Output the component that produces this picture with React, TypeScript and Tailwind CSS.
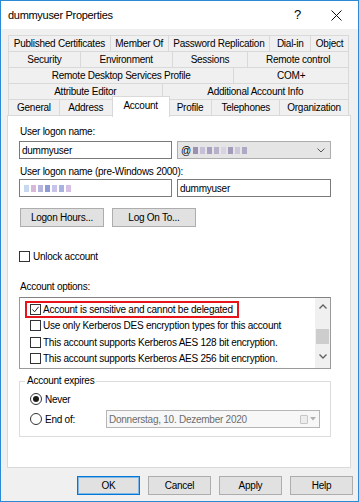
import React from "react";

const tabRows: { label: string; w: number }[][] = [
  [
    { label: "Published Certificates", w: 102 },
    { label: "Member Of", w: 58 },
    { label: "Password Replication", w: 102 },
    { label: "Dial-in", w: 41 },
    { label: "Object", w: 38 },
  ],
  [
    { label: "Security", w: 72 },
    { label: "Environment", w: 92 },
    { label: "Sessions", w: 76 },
    { label: "Remote control", w: 101 },
  ],
  [
    { label: "Remote Desktop Services Profile", w: 226 },
    { label: "COM+", w: 115 },
  ],
  [
    { label: "Attribute Editor", w: 154 },
    { label: "Additional Account Info", w: 187 },
  ],
];

const bottomTabs = [
  { label: "General", w: 51 },
  { label: "Address", w: 53 },
  { label: "Account", w: 56, active: true },
  { label: "Profile", w: 44 },
  { label: "Telephones", w: 68 },
  { label: "Organization", w: 69 },
];

const options = [
  { label: "Account is sensitive and cannot be delegated", checked: true, marked: true },
  { label: "Use only Kerberos DES encryption types for this account" },
  { label: "This account supports Kerberos AES 128 bit encryption." },
  { label: "This account supports Kerberos AES 256 bit encryption." },
];

function Checkbox({ checked = false }: { checked?: boolean }) {
  return (
    <span className="flex h-[11px] w-[11px] shrink-0 items-center justify-center border border-[#333333] bg-white">
      {checked && (
        <svg width="9" height="9" viewBox="0 0 9 9">
          <path d="M1.5 4.5 L3.6 6.8 L7.6 1.8" fill="none" stroke="#222" strokeWidth="1" />
        </svg>
      )}
    </span>
  );
}

function Radio({ checked = false }: { checked?: boolean }) {
  return (
    <span className="flex h-[12px] w-[12px] shrink-0 items-center justify-center rounded-full border border-[#333333] bg-white">
      {checked && <span className="h-[6px] w-[6px] rounded-full bg-[#1a1a1a]" />}
    </span>
  );
}

function Button({ children, w, primary = false }: { children: React.ReactNode; w: number; primary?: boolean }) {
  return (
    <div
      className={
        primary
          ? "flex h-[19px] items-center justify-center border border-[#0078d7] bg-[#e1e1e1] shadow-[inset_0_0_0_1px_#7fb7e6]"
          : "flex h-[19px] items-center justify-center border border-[#adadad] bg-[#e1e1e1]"
      }
      style={{ width: w }}
    >
      {children}
    </div>
  );
}

function Blur({ colors }: { colors: string[] }) {
  return (
    <span className="flex items-center gap-[2px] blur-[0.6px]">
      {colors.map((c, i) => (
        <span key={i} className="h-[7px] w-[5px]" style={{ background: c }} />
      ))}
    </span>
  );
}

export default function App() {
  return (
    <div
      className="flex h-[502px] w-[359px] flex-col border border-[#2b8ad6] bg-[#f0f0f0] text-[10px] tracking-[-0.25px] text-black"
      style={{ fontFamily: '"Liberation Sans", Arial, sans-serif' }}
    >
      {/* title bar */}
      <div className="flex h-[28px] shrink-0 items-center bg-white pl-[7px]">
        <span className="text-[11px] tracking-[-0.3px]">dummyuser Properties</span>
        <span className="ml-auto mr-[30px] text-[13px]">?</span>
        <svg className="mr-[16px]" width="11" height="11" viewBox="0 0 11 11">
          <path d="M0.5 0.5 L10.5 10.5 M10.5 0.5 L0.5 10.5" stroke="#111" strokeWidth="1" />
        </svg>
      </div>

      <div className="flex flex-col pl-[6px] pt-[6px]">
        {/* tab rows */}
        <div className="ml-[1px] flex w-[341px] flex-col">
          {tabRows.map((row, ri) => (
            <div key={ri} className="flex h-[16px] border-l border-t border-[#d9d9d9]">
              {row.map((t) => (
                <div
                  key={t.label}
                  className="flex items-center justify-center border-r border-[#d9d9d9] bg-[#f0f0f0] leading-none"
                  style={{ width: t.w }}
                >
                  {t.label}
                </div>
              ))}
            </div>
          ))}
          <div className="flex h-[16px] border-l border-t border-[#d9d9d9]">
            {bottomTabs.map((t) =>
              t.active ? (
                <div
                  key={t.label}
                  className="relative z-10 -mx-[1px] -mb-[1px] -mt-[4px] flex h-[21px] items-start justify-center border-x border-t border-[#d9d9d9] bg-white pt-[4px] leading-none"
                  style={{ width: t.w + 2 }}
                >
                  {t.label}
                </div>
              ) : (
                <div
                  key={t.label}
                  className="flex items-center justify-center border-r border-[#d9d9d9] bg-[#f0f0f0] leading-none"
                  style={{ width: t.w }}
                >
                  {t.label}
                </div>
              )
            )}
          </div>
        </div>

        {/* panel */}
        <div className="flex h-[353px] w-[344px] flex-col border border-[#d9d9d9] bg-white pl-[11px] pt-[10px]">
          <div className="h-[12px] pl-[1px] leading-[12px]">User logon name:</div>
          <div className="mt-[3px] flex gap-[5px]">
            <div className="flex h-[18px] w-[153px] items-center border border-[#7a7a7a] pl-[2px]">dummyuser</div>
            <div className="flex h-[18px] w-[154px] items-center border border-[#adadad] bg-[#e5e5e5] pl-[3px]">
              <span className="mr-[2px]">@</span>
              <Blur colors={["#9c8fb0", "#c7bfd8", "#a99fc0", "#b7b0c9", "#d8d2e2", "#a49cbb", "#cdc7da", "#b0a9c5"]} />
              <svg className="ml-auto mr-[5px]" width="8" height="5" viewBox="0 0 8 5">
                <path d="M0.5 0.5 L4 4 L7.5 0.5" fill="none" stroke="#555" strokeWidth="1" />
              </svg>
            </div>
          </div>

          <div className="mt-[7px] h-[12px] pl-[1px] leading-[12px]">User logon name (pre-Windows 2000):</div>
          <div className="mt-[1px] flex gap-[5px]">
            <div className="flex h-[18px] w-[153px] items-center border border-[#7a7a7a] pl-[4px]">
              <Blur colors={["#c7d9f0", "#d9b7d8", "#b7b5e0", "#8f9bd6", "#c7c3ea", "#a7b3e0", "#d6c0e6"]} />
            </div>
            <div className="flex h-[18px] w-[154px] items-center border border-[#7a7a7a] pl-[2px]">dummyuser</div>
          </div>

          <div className="ml-[1px] mt-[11px] flex gap-[8px]">
            <Button w={84}>Logon Hours...</Button>
            <Button w={84}>Log On To...</Button>
          </div>

          <div className="mt-[23px] flex h-[12px] items-center gap-[3px]">
            <Checkbox />
            <span>Unlock account</span>
          </div>

          <div className="mt-[19px] h-[12px] pl-[1px] leading-[12px]">Account options:</div>
          <div className="mt-[4px] flex h-[72px] w-[312px] border border-[#9a9a9a] border-t-[#828282]">
            <div className="flex flex-1 flex-col pl-[5px] pt-[3px]">
              {options.map((o) => (
                <div key={o.label} className="flex h-[16.5px]">
                  <div
                    className={
                      o.marked
                        ? "flex items-center gap-[2px] border-2 border-[#e8141c] pl-[3px] pr-[4px]"
                        : "flex items-center gap-[2px] border-2 border-transparent pl-[3px] pr-[4px]"
                    }
                  >
                    <Checkbox checked={o.checked} />
                    <span className="whitespace-nowrap">{o.label}</span>
                  </div>
                </div>
              ))}
            </div>
            <div className="flex w-[15px] flex-col items-center bg-[#f0f0f0]">
              <svg className="mt-[6px]" width="8" height="5" viewBox="0 0 8 5">
                <path d="M0.5 4.5 L4 1 L7.5 4.5" fill="none" stroke="#606060" strokeWidth="1.3" />
              </svg>
              <div className="mt-[20px] h-[15px] w-[13px] bg-[#cdcdcd]" />
              <svg className="mt-[10px]" width="8" height="5" viewBox="0 0 8 5">
                <path d="M0.5 0.5 L4 4 L7.5 0.5" fill="none" stroke="#606060" strokeWidth="1.3" />
              </svg>
            </div>
          </div>

          <fieldset className="mt-[6px] h-[62px] w-[312px] min-w-0 border border-[#dcdcdc] pl-[10px]">
            <legend className="-ml-[5px] px-[2px] leading-[12px]">Account expires</legend>
            <div className="mt-[6px] flex h-[12px] items-center gap-[3px]">
              <Radio checked />
              <span>Never</span>
            </div>
            <div className="mt-[5px] flex h-[18px] items-center">
              <Radio />
              <span className="ml-[3px] w-[61px] shrink-0 whitespace-nowrap">End of:</span>
              <div className="flex h-[18px] w-[214px] shrink-0 items-center border border-[#b5b5b5] bg-[#f7f7f7] pl-[2px] text-[#6d6d6d]">
                <span className="whitespace-nowrap">Donnerstag, 10. Dezember 2020</span>
                <span className="ml-auto mr-[3px] flex items-center gap-[2px]">
                  <span className="h-[9px] w-[8px] rounded-[1px] border border-[#c6c6c6] bg-[#ededed]" />
                  <svg width="6" height="4" viewBox="0 0 6 4">
                    <path d="M0 0 L6 0 L3 3.5 Z" fill="#b0b0b0" />
                  </svg>
                </span>
              </div>
            </div>
          </fieldset>
        </div>

        {/* dialog buttons */}
        <div className="mt-[8px] flex justify-end gap-[8px] pr-[5px]">
          <Button w={63} primary>
            OK
          </Button>
          <Button w={63}>Cancel</Button>
          <Button w={63}>Apply</Button>
          <Button w={63}>Help</Button>
        </div>
      </div>
    </div>
  );
}
